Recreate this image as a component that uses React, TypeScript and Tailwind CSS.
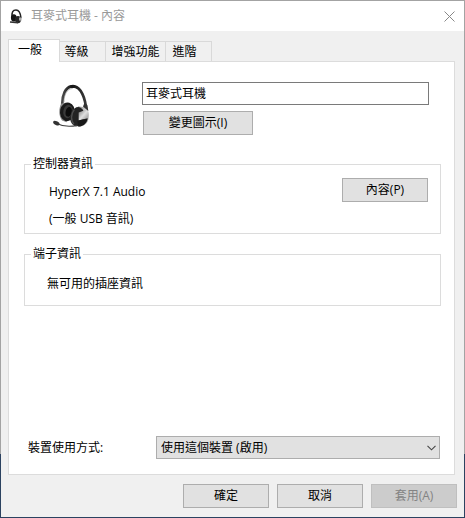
import { useState } from "react";
import type { ButtonHTMLAttributes, ReactNode } from "react";
import clsx from "clsx";

const tabs = [
  { name: "一般", width: "w-13" },
  { name: "等級", width: "w-[46px]" },
  { name: "增強功能", width: "w-[60px]" },
  { name: "進階", width: "w-[46px]" },
];

function Headset({ className }: { className?: string }) {
  return (
    <svg viewBox="6 6 117 117" preserveAspectRatio="none" className={className} aria-hidden="true">
      <defs>
        <linearGradient id="band" x1="0" x2="1">
          <stop offset="0" stopColor="#4a4a4a" />
          <stop offset="0.4" stopColor="#151515" />
          <stop offset="1" stopColor="#3a3a3a" />
        </linearGradient>
        <linearGradient id="cap" x1="0" y1="0" x2="1" y2="1">
          <stop offset="0" stopColor="#777" />
          <stop offset="0.5" stopColor="#e0e0e0" />
          <stop offset="1" stopColor="#8a8a8a" />
        </linearGradient>
      </defs>
      <path
        d="M37 66C35 36 46 12 69 12C94 13 106 44 109 76"
        fill="none"
        stroke="url(#band)"
        strokeWidth="8"
      />
      <path d="M42 54C42 34 51 18 68 18" fill="none" stroke="#999" strokeWidth="2" />
      <path d="M34 58C25 72 26 92 36 103L50 108L46 56Z" fill="#8a8a8a" />
      <ellipse cx="52" cy="80" rx="22" ry="25" transform="rotate(14 52 80)" fill="#1b1b1b" />
      <ellipse cx="54" cy="79" rx="14" ry="18" transform="rotate(14 54 79)" fill="#3a3a3a" />
      <ellipse cx="56" cy="80" rx="9" ry="13" transform="rotate(14 56 80)" fill="#0c0c0c" />
      <path d="M84 66L108 68C119 77 119 99 110 110C102 119 86 121 80 118Z" fill="url(#cap)" />
      <ellipse cx="82" cy="93" rx="21" ry="26" transform="rotate(18 82 93)" fill="#232323" />
      <path d="M73 74C62 86 62 104 72 113" fill="none" stroke="#4e4e4e" strokeWidth="4" />
      <path d="M86 82L110 74C117 82 116 92 112 98L86 103Z" fill="url(#cap)" />
      <path d="M82 104L113 97C112 108 103 118 85 120Z" fill="#181818" />
      <path d="M99 66L103 57L112 62L115 78Z" fill="#333" />
      <path d="M20 111C40 120 60 120 82 116" fill="none" stroke="#3d3d3d" strokeWidth="3" />
      <ellipse cx="19" cy="110" rx="10" ry="5" transform="rotate(20 19 110)" fill="#333" />
    </svg>
  );
}

function SmallHeadset() {
  return (
    <svg viewBox="0 0 14 15" className="h-[15px] w-[14px]" aria-hidden="true">
      <path d="M3.2 8C2.4 3 4 1 7 1C10.2 1 11.5 4 12 9" fill="none" stroke="#222" strokeWidth="1.5" />
      <ellipse cx="4.8" cy="8.8" rx="2.9" ry="3.6" fill="#151515" />
      <ellipse cx="9" cy="10.6" rx="3" ry="3.6" fill="#262626" />
      <path d="M10 8.4L12.8 8.5L12.4 11.8L10 11.6Z" fill="#aaa" />
      <path d="M1 13L9 13.6" stroke="#333" strokeWidth="1.6" />
    </svg>
  );
}

function PushButton({ className, ...props }: ButtonHTMLAttributes<HTMLButtonElement>) {
  return (
    <button
      type="button"
      className={clsx(
        "h-6 border border-[#adadad] bg-[#e1e1e1] text-center leading-4 disabled:border-[#bfbfbf] disabled:bg-[#cccccc] disabled:text-[#838383]",
        className
      )}
      {...props}
    />
  );
}

function Group({ title, className, children }: { title: string; className?: string; children: ReactNode }) {
  return (
    <fieldset className="border border-[#dcdcdc]">
      <legend className="ml-[6px] px-[2px] leading-4">{title}</legend>
      <div className={className}>{children}</div>
    </fieldset>
  );
}

export default function App() {
  const [active, setActive] = useState("一般");
  const [name, setName] = useState("耳麥式耳機");

  return (
    <div className="flex min-h-screen flex-col bg-[linear-gradient(to_bottom,#a3a3a3_454px,#2b4260_454px)] p-px font-['Open_Sans','Noto_Sans_CJK_TC',sans-serif] text-[12px] leading-4 text-black">
      <header className="flex h-[30px] items-center bg-white pr-[9px] pl-2">
        <SmallHeadset />
        <h1 className="ml-2 flex-1 text-[#999]">耳麥式耳機 - 內容</h1>
        <button type="button" aria-label="關閉">
          <svg viewBox="0 0 11 11" className="size-[11px]" aria-hidden="true">
            <path d="M0.5 0.5L10.5 10.5M10.5 0.5L0.5 10.5" stroke="#888" strokeWidth="1" />
          </svg>
        </button>
      </header>

      <main className="flex flex-1 flex-col bg-[#f0f0f0] pt-2 pr-[9px] pl-[7px]">
        <div role="tablist" className="flex items-end">
          {tabs.map((tab) => (
            <button
              key={tab.name}
              type="button"
              role="tab"
              aria-selected={active === tab.name}
              onClick={() => setActive(tab.name)}
              className={clsx(
                "border-t border-r border-[#d9d9d9]",
                tab.width,
                active === tab.name
                  ? "relative -mb-px h-[23px] border-l bg-white pr-2 pb-[2px]"
                  : "h-5 bg-[#f0f0f0] pr-3 last:pr-2 nth-3:pr-0"
              )}
            >
              {tab.name}
            </button>
          ))}
        </div>

        <section className="flex flex-1 flex-col border border-[#dcdcdc] bg-white pr-[13px] pb-[15px] pl-[15px]">
          <div className="flex pt-5 pr-3 pl-7">
            <Headset className="mt-[2px] h-11 w-[39px] shrink-0" />
            <div className="ml-[51px] flex-1">
              <input
                type="text"
                aria-label="裝置名稱"
                value={name}
                onChange={(e) => setName(e.target.value)}
                className="block h-[23px] w-full border border-[#7a7a7a] bg-white px-[3px] pb-[2px] outline-none"
              />
              <PushButton className="mt-[6px] ml-px block w-[110px]">變更圖示(I)</PushButton>
            </div>
          </div>

          <div className="mt-[21px] flex flex-col gap-3">
            <Group title="控制器資訊" className="flex items-start justify-between pt-[6px] pr-3 pb-px pl-6">
              <div className="leading-[27px]">
                <p>HyperX 7.1 Audio</p>
                <p>(一般 USB 音訊)</p>
              </div>
              <PushButton className="w-[86px]">內容(P)</PushButton>
            </Group>

            <Group title="端子資訊" className="py-2 pl-[22px] leading-[27px]">
              <p>無可用的插座資訊</p>
            </Group>
          </div>

          <div className="mt-auto flex items-center pr-px pl-1">
            <label htmlFor="usage" className="w-32 shrink-0">
              裝置使用方式:
            </label>
            <div className="relative flex-1">
              <select
                id="usage"
                className="block h-[23px] w-full appearance-none border border-[#adadad] bg-[#e1e1e1] pr-6 pl-1 leading-4"
              >
                <option>使用這個裝置 (啟用)</option>
                <option>不要使用這個裝置 (停用)</option>
              </select>
              <svg
                viewBox="0 0 9 6"
                className="pointer-events-none absolute top-[9px] right-1 h-[6px] w-[9px]"
                aria-hidden="true"
              >
                <path d="M0.5 0.8L4.5 4.8L8.5 0.8" fill="none" stroke="#444" strokeWidth="1.1" />
              </svg>
            </div>
          </div>
        </section>
      </main>

      <footer className="flex justify-end gap-2 bg-[#f0f0f0] py-[9px] pr-[7px]">
        <PushButton className="w-[86px]">確定</PushButton>
        <PushButton className="w-[86px]">取消</PushButton>
        <PushButton className="w-[86px]" disabled>
          套用(A)
        </PushButton>
      </footer>
    </div>
  );
}
